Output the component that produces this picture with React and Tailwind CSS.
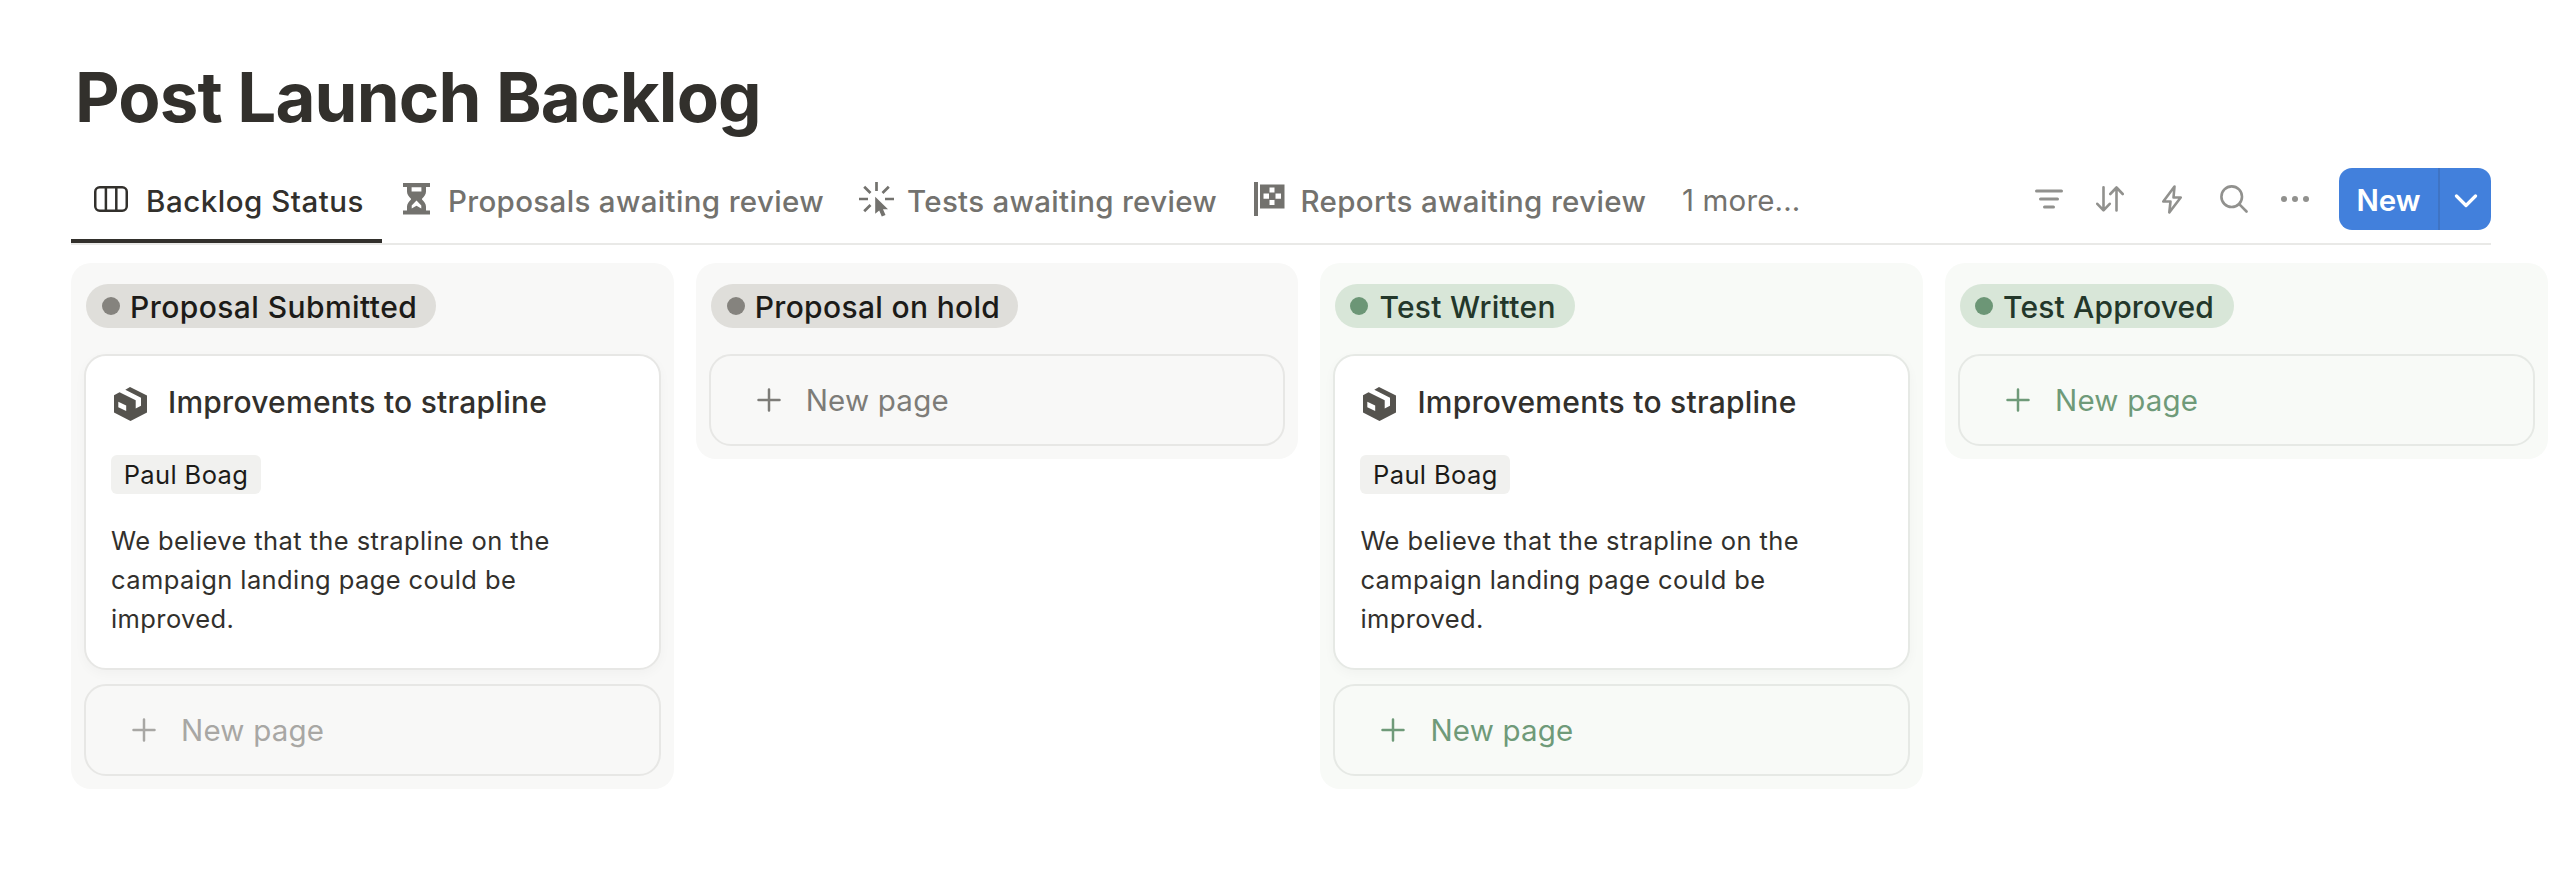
const GREY = {
  column: "bg-[#f8f8f7]",
  pill: "bg-[#dfdeda] text-[#1c1b18]",
  dot: "bg-[#85837e]",
  border: "border-[#e7e7e5]",
};
const GREEN = {
  column: "bg-[#f8faf7]",
  pill: "bg-[#d8e6d8] text-[#23372a]",
  dot: "bg-[#6c9676]",
  border: "border-[#e6e9e5]",
};

const COLUMNS = [
  { name: "Proposal Submitted", pill: "w-[350px] pl-4 gap-[10px] tracking-[0.43px]", tone: GREY, card: true, action: "text-[#a8a7a4]" },
  { name: "Proposal on hold", pill: "w-[307px] pl-4 gap-[10px] tracking-[0.33px]", tone: GREY, card: false, action: "text-[#7d7c78]" },
  { name: "Test Written", pill: "w-[240px] pl-[15px] gap-[11px] tracking-[0.3px]", tone: GREEN, card: true, action: "text-[#6f9a79]" },
  { name: "Test Approved", pill: "w-[274px] pl-[15px] gap-[10px] tracking-[0.15px]", tone: GREEN, card: false, action: "text-[#6f9a79]" },
];

function BoardIcon() {
  return (
    <svg width="34" height="26" viewBox="0 0 34 26" fill="none" stroke="currentColor" strokeWidth="2.5">
      <rect x="1.25" y="1.25" width="31.5" height="23.5" rx="4.5" />
      <path d="M11.9 1v24M22.3 1v24" />
    </svg>
  );
}

function HourglassIcon() {
  return (
    <svg width="27" height="32" viewBox="0 0 27 32" fill="currentColor">
      <path
        fillRule="evenodd"
        d="M0 0h27v4h-4v4.500c0 3-1.600 4.700-4 7.300v.8c2.400 2.400 4 4.200 4 7.200V27.500h4V31.500H0V27.500h4v-3.700c0-3 1.600-4.800 4-7.200v-.8c-2.400-2.600-4-4.300-4-7.300V4H0zM8.600 4.200v4.300h9.800V4.200zM13.500 17.500 8.700 22.600v3l4.800-2.900 4.800 2.900v-3z"
      />
    </svg>
  );
}

function ClickIcon() {
  return (
    <svg width="35" height="35" viewBox="0 0 35 35" fill="currentColor">
      <path
        d="M17.500 0v9M0 17h9M26 17h9M5.200 4.700l6.300 6.300M29.800 4.700 23.500 11M5.200 29.300l6.300-6.300"
        stroke="currentColor"
        strokeWidth="2.7"
        fill="none"
      />
      <path d="M16.200 14.800v17l4-3.200 2.600 5.900 3.700-1.600-2.500-5.700h5z" />
    </svg>
  );
}

function FlagIcon() {
  return (
    <svg width="31" height="34" viewBox="0 0 31 34" fill="currentColor">
      <path d="M0 0h4v34H0z" />
      <path
        fillRule="evenodd"
        d="M6 2.500h24.500v24H6zM15.500 5.500v5h5v-5zM9.500 11.500v5.200h5.500v-5.200zM21.500 11.500v5.200h5.500v-5.200zM15.500 18v5h5v-5z"
      />
    </svg>
  );
}

function PackageIcon() {
  return (
    <svg className="ml-[3px] mr-[21px] mt-1" width="33" height="34" viewBox="0 0 33 34" fill="#55534e">
      <path d="M0 8.300 5.500 5.300 21.700 13.300V21.500l5.300-2.700V10.800L11.300 2.800 16 0 33 8.500V25.500L16.500 34 0 25.500z" />
      <path d="M4.300 14.800 12.200 18.500V23.900L4.300 20.200z" fill="#fff" />
    </svg>
  );
}

function PlusIcon() {
  return (
    <svg width="24" height="24" viewBox="0 0 24 24" fill="none" stroke="currentColor" strokeWidth="2.5" strokeLinecap="round">
      <path d="M12 1.500v21M1.500 12h21" />
    </svg>
  );
}

function Tab({ icon, label, className }) {
  return (
    <div className={`flex text-[29.5px] font-medium ${className}`}>
      <div className="flex h-[62px] items-center whitespace-nowrap">
        {icon}
        <span className="pt-1">{label}</span>
      </div>
    </div>
  );
}

function Toolbar() {
  return (
    <div className="ml-auto flex h-[62px] items-center">
      <svg className="mr-[33px]" width="28" height="20" viewBox="0 0 28 20" fill="none" stroke="#91918e" strokeWidth="3" strokeLinecap="round">
        <path d="M1.500 2h25M5.500 10h17M9.500 18h9" />
      </svg>
      <svg className="mr-[38px]" width="28" height="26" viewBox="0 0 28 26" fill="none" stroke="#91918e" strokeWidth="2.6" strokeLinecap="round" strokeLinejoin="round">
        <path d="M7.500 1.300v23M1.300 17.800l6.200 6.500 6.200-6.500M20.500 24.500v-23M14.300 8l6.200-6.500L26.700 8" />
      </svg>
      <svg className="mr-[38px]" width="20" height="29" viewBox="0 0 20 29" fill="none" stroke="#91918e" strokeWidth="2.6" strokeLinejoin="round">
        <path d="M12.500 1.500 1.300 16.500H8.500L7.300 27.500 18.700 12.500H11.500z" />
      </svg>
      <svg className="mr-[33px]" width="28" height="28" viewBox="0 0 28 28" fill="none" stroke="#91918e" strokeWidth="2.6" strokeLinecap="round">
        <circle cx="11.700" cy="11.700" r="10.300" />
        <path d="M19.200 19.200l7.300 7.300" />
      </svg>
      <svg className="mr-[30px]" width="28" height="6" viewBox="0 0 28 6" fill="#91918e">
        <circle cx="3" cy="3" r="3" />
        <circle cx="14" cy="3" r="3" />
        <circle cx="25" cy="3" r="3" />
      </svg>
      <div className="flex h-[62px] w-[152px] overflow-hidden rounded-[13px] bg-[#4280dc] text-white">
        <div className="flex w-[101px] items-center justify-center border-r-2 border-[#3f74c4] pt-[2px] text-[29.5px] font-semibold">New</div>
        <div className="flex flex-1 items-center justify-center pt-1">
          <svg width="24" height="14" viewBox="0 0 24 14" fill="none" stroke="currentColor" strokeWidth="3.2" strokeLinecap="round" strokeLinejoin="round">
            <path d="M2.500 2l9.500 9.500L21.500 2" />
          </svg>
        </div>
      </div>
    </div>
  );
}

function Card({ tone }) {
  return (
    <article className={`mb-[14px] h-[316px] rounded-[22px] border-2 bg-white pl-[25px] pt-[26px] shadow-[0_4px_12px_rgba(0,0,0,0.03)] ${tone.border}`}>
      <h3 className="flex h-10 items-center text-[30px] font-medium tracking-[0.25px]">
        <PackageIcon />
        Improvements to strapline
      </h3>
      <div className="mt-[33px] flex h-[39px] w-[150px] items-center justify-center rounded-[6px] bg-[#f1f1ef] pt-px text-[25.5px] tracking-[0.38px] text-[#1c1b18]">
        Paul Boag
      </div>
      <p className="mt-[27px] w-[460px] text-[25.5px] leading-[39px] tracking-[0.4px]">
        We believe that the strapline on the campaign landing page could be improved.
      </p>
    </article>
  );
}

function Column({ name, pill, tone, card, action }) {
  return (
    <section className={`w-[602.7px] shrink-0 rounded-[20px] px-[13px] pb-[13px] pt-[21px] ${tone.column}`}>
      <div className={`mb-[26px] ml-0.5 flex h-[44px] items-center whitespace-nowrap rounded-full text-[30px] font-medium ${pill} ${tone.pill}`}>
        <span className={`size-[18px] shrink-0 rounded-full ${tone.dot}`} />
        <span className="pt-[2px]">{name}</span>
      </div>
      {card && <Card tone={tone} />}
      <button className={`flex h-[92px] w-full items-center gap-[25px] rounded-[22px] border-2 pl-[46px] text-[29.5px] tracking-[0.2px] ${tone.border} ${action}`}>
        <PlusIcon />
        New page
      </button>
    </section>
  );
}

export default function App() {
  return (
    <div className="h-[872px] overflow-hidden bg-white pl-[71px] pt-[56px] font-['Inter',sans-serif] text-[#32302c]">
      <h1 className="ml-1 h-[82px] text-[69px] font-bold leading-[82px] tracking-[-0.88px]">Post Launch Backlog</h1>
      <nav className="mt-[30px] flex h-[77px] w-[2420px] border-b-2 border-[#e9e9e7] text-[#73726e]">
        <Tab
          className="w-[311px] border-b-4 border-[#32302c] pl-[23px] text-[#32302c] tracking-[0.52px]"
          icon={<span className="mr-[18px]"><BoardIcon /></span>}
          label="Backlog Status"
        />
        <Tab
          className="w-[456px] pl-[21px] tracking-[0.34px]"
          icon={<span className="mr-[18px]"><HourglassIcon /></span>}
          label="Proposals awaiting review"
        />
        <Tab
          className="w-[395px] pl-[21px] tracking-[0.3px]"
          icon={<span className="mr-[13px]"><ClickIcon /></span>}
          label="Tests awaiting review"
        />
        <Tab
          className="w-[429px] pl-[21px] tracking-[0.36px]"
          icon={<span className="mr-[15.5px]"><FlagIcon /></span>}
          label="Reports awaiting review"
        />
        <div className="flex h-[62px] items-center pl-5 pt-[2px] text-[29.5px] tracking-[0.15px]">1 more...</div>
        <Toolbar />
      </nav>
      <main className="mt-[18px] flex items-start gap-[22px]">
        {COLUMNS.map((column) => (
          <Column key={column.name} {...column} />
        ))}
      </main>
    </div>
  );
}
